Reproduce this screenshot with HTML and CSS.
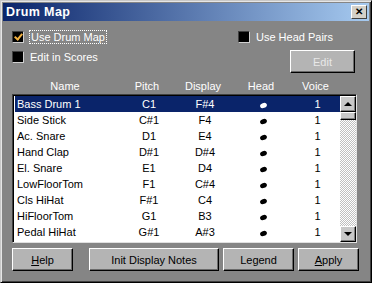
FILE: index.html
```html
<!DOCTYPE html>
<html lang="en">
<head>
  <meta charset="UTF-8" />
  <title>Drum Map</title>
  <link rel="stylesheet" href="styles.css">
</head>
<body>
  <div class="window">
    <div class="titlebar">
      <span class="title">Drum Map</span>
      <span class="close">&#x2715;</span>
    </div>

    <div class="options">
      <div class="opts-left">
        <label class="check focus"><span class="box checked"></span><span class="lbl">Use Drum Map</span></label>
        <label class="check"><span class="box"></span><span class="lbl">Edit in Scores</span></label>
      </div>
      <div class="opts-right">
        <label class="check"><span class="box"></span><span class="lbl">Use Head Pairs</span></label>
        <button class="btn btn-edit" disabled>Edit</button>
      </div>
    </div>

    <div class="header cols">
      <span class="c-name">Name</span>
      <span>Pitch</span>
      <span>Display</span>
      <span>Head</span>
      <span>Voice</span>
    </div>

    <div class="listbox">
      <div class="rows" id="rows"></div>
      <div class="scrollbar">
        <div class="sb-btn"><span class="arrow up"></span></div>
        <div class="sb-thumb"></div>
        <div class="sb-track"></div>
        <div class="sb-btn"><span class="arrow down"></span></div>
      </div>
    </div>

    <div class="buttons">
      <button class="btn btn-help"><u>H</u>elp</button>
      <button class="btn btn-init">Init Display Notes</button>
      <button class="btn btn-legend">Legend</button>
      <button class="btn btn-apply"><u>A</u>pply</button>
    </div>
  </div>

  <script>
    const drums = [
      ["Bass Drum 1", "C1", "F#4"],
      ["Side Stick", "C#1", "F4"],
      ["Ac. Snare", "D1", "E4"],
      ["Hand Clap", "D#1", "D#4"],
      ["El. Snare", "E1", "D4"],
      ["LowFloorTom", "F1", "C#4"],
      ["Cls HiHat", "F#1", "C4"],
      ["HiFloorTom", "G1", "B3"],
      ["Pedal HiHat", "G#1", "A#3"]
    ];

    const rows = document.getElementById("rows");
    drums.forEach((d, i) => {
      const row = document.createElement("div");
      row.className = "row cols" + (i === 0 ? " selected" : "");
      row.innerHTML =
        '<span class="c-name">' + d[0] + '</span>' +
        '<span>' + d[1] + '</span>' +
        '<span>' + d[2] + '</span>' +
        '<span><i class="note"></i></span>' +
        '<span>1</span>';
      rows.appendChild(row);
    });
  </script>
</body>
</html>
```

FILE: styles.css
```css
body {
  margin: 0;
  background: #858585;
  font-family: "Liberation Sans", Arial, sans-serif;
  font-size: 11px;
  color: #000;
}

.window {
  width: 372px;
  height: 283px;
  box-sizing: border-box;
  background: #858585;
  border-top: 1px solid #c8c8c8;
  border-left: 1px solid #c8c8c8;
  border-right: 1px solid #000;
  border-bottom: 1px solid #000;
  box-shadow: inset 1px 1px 0 #e6e6e6, inset -1px -1px 0 #404040;
  padding: 2px;
}

.titlebar {
  height: 18px;
  display: flex;
  align-items: center;
  justify-content: space-between;
  padding: 0 2px 0 3px;
  background: linear-gradient(to right, #0a246a, #a6caf0);
}

.title {
  color: #fff;
  font-weight: bold;
  font-size: 12.5px;
  letter-spacing: 0.4px;
}

.close {
  width: 16px;
  height: 14px;
  box-sizing: border-box;
  background: #d4d0c8;
  border-top: 1px solid #fff;
  border-left: 1px solid #fff;
  border-right: 1px solid #404040;
  border-bottom: 1px solid #404040;
  font-size: 10px;
  font-weight: bold;
  line-height: 12px;
  text-align: center;
}

.options {
  display: flex;
  justify-content: space-between;
  box-sizing: border-box;
  padding: 9px 14px 0 9px;
  height: 58px;
}

.opts-left,
.opts-right {
  display: flex;
  flex-direction: column;
}

.opts-left {
  gap: 6px;
}

.opts-right {
  align-items: flex-end;
  gap: 6px;
}

.check {
  display: flex;
  align-items: center;
  gap: 6px;
  height: 14px;
  color: #fff;
}

.box {
  width: 12px;
  height: 12px;
  box-sizing: border-box;
  background: #000;
  border-top: 1px solid #404040;
  border-left: 1px solid #404040;
  border-right: 1px solid #d0d0d0;
  border-bottom: 1px solid #d0d0d0;
  position: relative;
}

.box.checked::after {
  content: "";
  position: absolute;
  left: 3px;
  top: 0px;
  width: 3px;
  height: 6px;
  border-right: 2px solid #f0b040;
  border-bottom: 2px solid #f0b040;
  transform: rotate(40deg);
}

.focus .lbl {
  outline: 1px dotted #fff;
  padding: 0 1px;
}

.opts-right .check {
  margin-right: 22px;
}

.btn {
  font-family: "Liberation Sans", Arial, sans-serif;
  font-size: 11px;
  height: 23px;
  background: #b4b4b4;
  color: #000;
  border-top: 1px solid #fff;
  border-left: 1px solid #fff;
  border-right: 1px solid #000;
  border-bottom: 1px solid #000;
  box-shadow: inset -1px -1px 0 #6a6a6a;
  padding: 0;
}

.btn-edit {
  width: 65px;
  color: #e8e8e8;
}

.cols {
  display: grid;
  grid-template-columns: 104px 60px 52px 64px 45px;
}

.cols span {
  text-align: center;
}

.header {
  color: #fff;
  height: 15px;
  line-height: 15px;
  padding-left: 10px;
}

.listbox {
  margin: 0 12px 0 9px;
  height: 149px;
  box-sizing: border-box;
  background: #fff;
  border-top: 1px solid #404040;
  border-left: 1px solid #404040;
  border-right: 1px solid #e0e0e0;
  border-bottom: 1px solid #e0e0e0;
  box-shadow: inset 1px 1px 0 #000;
  display: flex;
  padding: 1px 0 0 1px;
}

.rows {
  flex: 1;
  padding-left: 1px;
}

.row {
  height: 16px;
  line-height: 16px;
}

.row .c-name {
  text-align: left;
  padding-left: 2px;
}

.row.selected {
  background: #0a246a;
  color: #fff;
}

.note {
  display: inline-block;
  width: 7px;
  height: 5px;
  background: #000;
  border-radius: 50%;
  transform: rotate(-20deg);
  vertical-align: middle;
}

.selected .note {
  background: #fff;
}

.scrollbar {
  width: 16px;
  display: flex;
  flex-direction: column;
  background-color: #fff;
  background-image: repeating-conic-gradient(#c0c0c0 0 25%, #fff 0 50%);
  background-size: 2px 2px;
}

.sb-btn,
.sb-thumb {
  height: 16px;
  box-sizing: border-box;
  background: #c8c8c8;
  border-top: 1px solid #fff;
  border-left: 1px solid #fff;
  border-right: 1px solid #000;
  border-bottom: 1px solid #000;
  box-shadow: inset -1px -1px 0 #808080;
  display: flex;
  align-items: center;
  justify-content: center;
}

.sb-thumb {
  height: 8px;
}

.sb-track {
  flex: 1;
}

.arrow {
  width: 0;
  height: 0;
  border-left: 4px solid transparent;
  border-right: 4px solid transparent;
}

.arrow.up {
  border-bottom: 4px solid #000;
}

.arrow.down {
  border-top: 4px solid #000;
}

.buttons {
  display: flex;
  padding: 5px 0 0 9px;
}

.btn-help {
  width: 61px;
}

.btn-init {
  width: 130px;
  margin-left: 16px;
}

.btn-legend {
  width: 71px;
  margin-left: 4px;
}

.btn-apply {
  width: 61px;
  margin-left: 4px;
}
```
